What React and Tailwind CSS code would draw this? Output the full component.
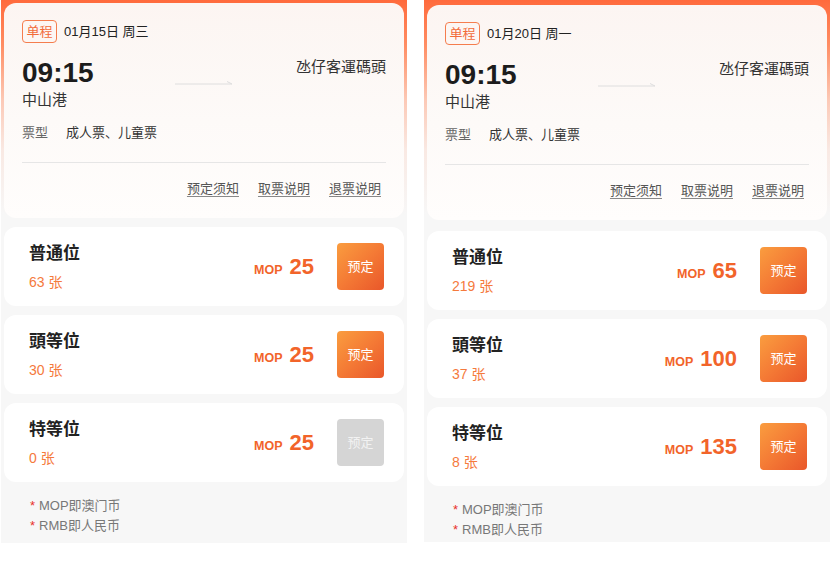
import React from "react";

const panels = [
  {
    date: "01月15日 周三",
    pad: "pt-[3px]",
    first: "mt-[9px]",
    seats: [
      { name: "普通位", count: 63, price: 25, ok: true },
      { name: "頭等位", count: 30, price: 25, ok: true },
      { name: "特等位", count: 0, price: 25, ok: false },
    ],
  },
  {
    date: "01月20日 周一",
    pad: "pt-[5px]",
    first: "mt-[11px]",
    seats: [
      { name: "普通位", count: 219, price: 65, ok: true },
      { name: "頭等位", count: 37, price: 100, ok: true },
      { name: "特等位", count: 8, price: 135, ok: true },
    ],
  },
];

function Arrow() {
  return (
    <svg width="58" height="6" viewBox="0 0 58 6" className="block">
      <line x1="0" y1="5" x2="57" y2="5" stroke="#dedede" strokeWidth="1" />
      <line x1="52" y1="2.5" x2="57" y2="5" stroke="#dedede" strokeWidth="1" />
    </svg>
  );
}

function Header({ date }) {
  return (
    <div className="rounded-[12px] bg-[linear-gradient(180deg,#fcf5f2_0%,#fdfaf8_55%,#fffdfc_100%)] px-[18px] pt-[17px] pb-[19px]">
      <div className="flex items-center h-[23px]">
        <div className="h-[23px] w-[35px] border border-[#f57d4e] rounded-[4px] flex items-center justify-center text-[13px] leading-none text-[#f26b3a]">
          单程
        </div>
        <div className="ml-[7px] text-[13px] leading-[20px] text-[#222]">{date}</div>
      </div>
      <div className="grid grid-cols-3 mt-[16px]">
        <div>
          <div className="text-[28px] leading-[28px] font-bold text-[#1c1c1c]">09:15</div>
          <div className="mt-[3px] text-[15px] leading-[20px] text-[#333]">中山港</div>
        </div>
        <div className="flex justify-center pt-[20px]">
          <Arrow />
        </div>
        <div className="text-right -mt-[2px] text-[15px] leading-[20px] text-[#333]">氹仔客運碼頭</div>
      </div>
      <div className="flex mt-[13px] text-[13px] leading-[20px]">
        <span className="text-[#666] w-[44px]">票型</span>
        <span className="text-[#333]">成人票、儿童票</span>
      </div>
      <div className="mt-[19px] h-px bg-[#e6e6e6]" />
      <div className="mt-[16px] flex justify-end gap-[19px] pr-[5px] text-[13px] leading-[20px] text-[#555]">
        <span className="underline underline-offset-[3px] decoration-[#888]">预定须知</span>
        <span className="underline underline-offset-[3px] decoration-[#888]">取票说明</span>
        <span className="underline underline-offset-[3px] decoration-[#888]">退票说明</span>
      </div>
    </div>
  );
}

function Seat({ s, mt }) {
  return (
    <div className={`${mt} h-[79px] rounded-[12px] bg-white pl-[25px] pr-[20px] flex items-center`}>
      <div className="flex-1 flex flex-col">
        <div className="text-[17px] leading-[22px] font-bold text-[#222]">{s.name}</div>
        <div className="mt-[8px] text-[14px] leading-[18px] text-[#f57a3d]">{s.count} 张</div>
      </div>
      <div className="flex items-baseline mr-[23px] text-[#f2642a] font-bold">
        <span className="text-[12.5px] leading-none">MOP</span>
        <span className="ml-[7px] text-[22px] leading-none">{s.price}</span>
      </div>
      {s.ok ? (
        <div className="w-[47px] h-[47px] rounded-[4px] bg-[linear-gradient(135deg,#fa9d3f_0%,#f47a35_50%,#e9572a_100%)] flex items-center justify-center text-[13px] text-white">
          预定
        </div>
      ) : (
        <div className="w-[47px] h-[47px] rounded-[4px] bg-[#d5d5d5] flex items-center justify-center text-[13px] text-[#f2f2f2]">
          预定
        </div>
      )}
    </div>
  );
}

function Panel({ p, cls }) {
  return (
    <div
      className={`${cls} w-[406px] px-[3px] ${p.pad} bg-[linear-gradient(180deg,#ff6a3c_0px,#ff8d63_45px,#fcc9b6_100px,#f9e9e3_150px,#f7f7f7_215px)]`}
    >
      <Header date={p.date} />
      <Seat s={p.seats[0]} mt={p.first} />
      <Seat s={p.seats[1]} mt="mt-[9px]" />
      <Seat s={p.seats[2]} mt="mt-[9px]" />
      <div className="mt-[14px] pl-[26px] text-[13px] leading-[20px] text-[#777]">
        <div className="flex">
          <span className="text-[#e8312a] w-[9px]">*</span>
          <span>MOP即澳门币</span>
        </div>
        <div className="flex">
          <span className="text-[#e8312a] w-[9px]">*</span>
          <span>RMB即人民币</span>
        </div>
      </div>
    </div>
  );
}

export default function App() {
  return (
    <div className="w-[839px] h-[564px] bg-white flex items-start overflow-hidden font-['Liberation_Sans','Noto_Sans_CJK_SC',sans-serif]">
      <Panel p={panels[0]} cls="ml-[1px] h-[543px]" />
      <Panel p={panels[1]} cls="ml-[17px] h-[542px]" />
    </div>
  );
}
